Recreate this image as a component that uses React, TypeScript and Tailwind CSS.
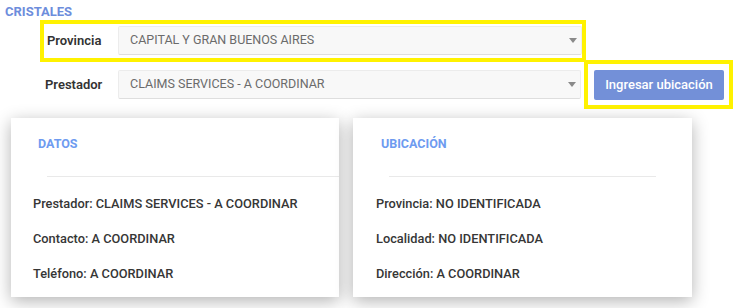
import type { ReactNode } from "react";

const datos = [
  "Prestador: CLAIMS SERVICES - A COORDINAR",
  "Contacto: A COORDINAR",
  "Teléfono: A COORDINAR",
];

const ubicacion = [
  "Provincia: NO IDENTIFICADA",
  "Localidad: NO IDENTIFICADA",
  "Dirección: A COORDINAR",
];

function Caret() {
  return (
    <svg width="8" height="5" viewBox="0 0 8 5" className="shrink-0">
      <path d="M0 0h8L4 5z" fill="#8a8a8a" />
    </svg>
  );
}

function FakeSelect({ value, className = "" }: { value: string; className?: string }) {
  return (
    <div
      className={`flex h-[29px] items-center justify-between rounded-[2px] border border-[#ececec] border-b-[#dedede] bg-[#f8f8f8] pl-[11px] pr-[4px] text-[12.5px] text-[#6b6b6b] ${className}`}
    >
      <span>{value}</span>
      <Caret />
    </div>
  );
}

function Card({
  title,
  rows,
  className = "",
  titleClass = "",
  rowsClass = "",
  ruleClass = "",
  children,
}: {
  title: string;
  rows: string[];
  className?: string;
  titleClass?: string;
  rowsClass?: string;
  ruleClass?: string;
  children?: ReactNode;
}) {
  return (
    <div
      className={`h-[179px] shrink-0 bg-white shadow-[0_4px_16px_rgba(0,0,0,0.3)] ${className}`}
    >
      <div className={`pt-[20px] text-[12.5px] font-bold leading-[12px] text-[#6e9bf0] ${titleClass}`}>
        {title}
      </div>
      <div className={`mt-[26px] h-px bg-[#e9e9e9] ${ruleClass}`} />
      <div className={`flex flex-col gap-[21px] pt-[20px] ${rowsClass}`}>
        {rows.map((r) => (
          <div key={r} className="text-[12.8px] font-medium leading-[14px] text-[#363636]">
            {r}
          </div>
        ))}
      </div>
      {children}
    </div>
  );
}

export default function App() {
  return (
    <div className="h-[308px] w-[744px] overflow-hidden bg-white font-['Roboto',sans-serif]">
      <div className="pl-[5px] pt-[6px] text-[13px] font-bold leading-[12px] text-[#6d8ddc]">
        CRISTALES
      </div>

      <div className="ml-[40px] mt-[2px] flex h-[42px] w-[546px] items-center border-4 border-[#fff200] pb-px">
        <div className="w-[74px] pl-[3px] text-[13px] font-semibold text-[#333]">Provincia</div>
        <FakeSelect value="CAPITAL Y GRAN BUENOS AIRES" className="w-[464px]" />
      </div>

      <div className="mt-[-2px] flex items-center">
        <div className="ml-[45px] w-[73px] text-[13px] font-semibold text-[#333]">Prestador</div>
        <FakeSelect value="CLAIMS SERVICES - A COORDINAR" className="w-[463px]" />
        <div className="ml-[3px] flex h-[49px] w-[149px] items-center border-4 border-[#fff200] pl-[6px]">
          <button
            type="button"
            className="h-[30px] w-[130px] rounded-[2px] bg-[#7390d8] text-[13px] font-medium text-white"
          >
            Ingresar ubicación
          </button>
        </div>
      </div>

      <div className="mt-[9px] flex gap-[14px] pl-[11px]">
        <Card
          title="DATOS"
          rows={datos}
          className="w-[328px]"
          titleClass="pl-[27px]"
          rowsClass="pl-[22px]"
          ruleClass="ml-[36px]"
        />
        <Card
          title="UBICACIÓN"
          rows={ubicacion}
          className="w-[339px]"
          titleClass="pl-[28px]"
          rowsClass="pl-[23px]"
          ruleClass="mx-[36px]"
        />
      </div>
    </div>
  );
}
